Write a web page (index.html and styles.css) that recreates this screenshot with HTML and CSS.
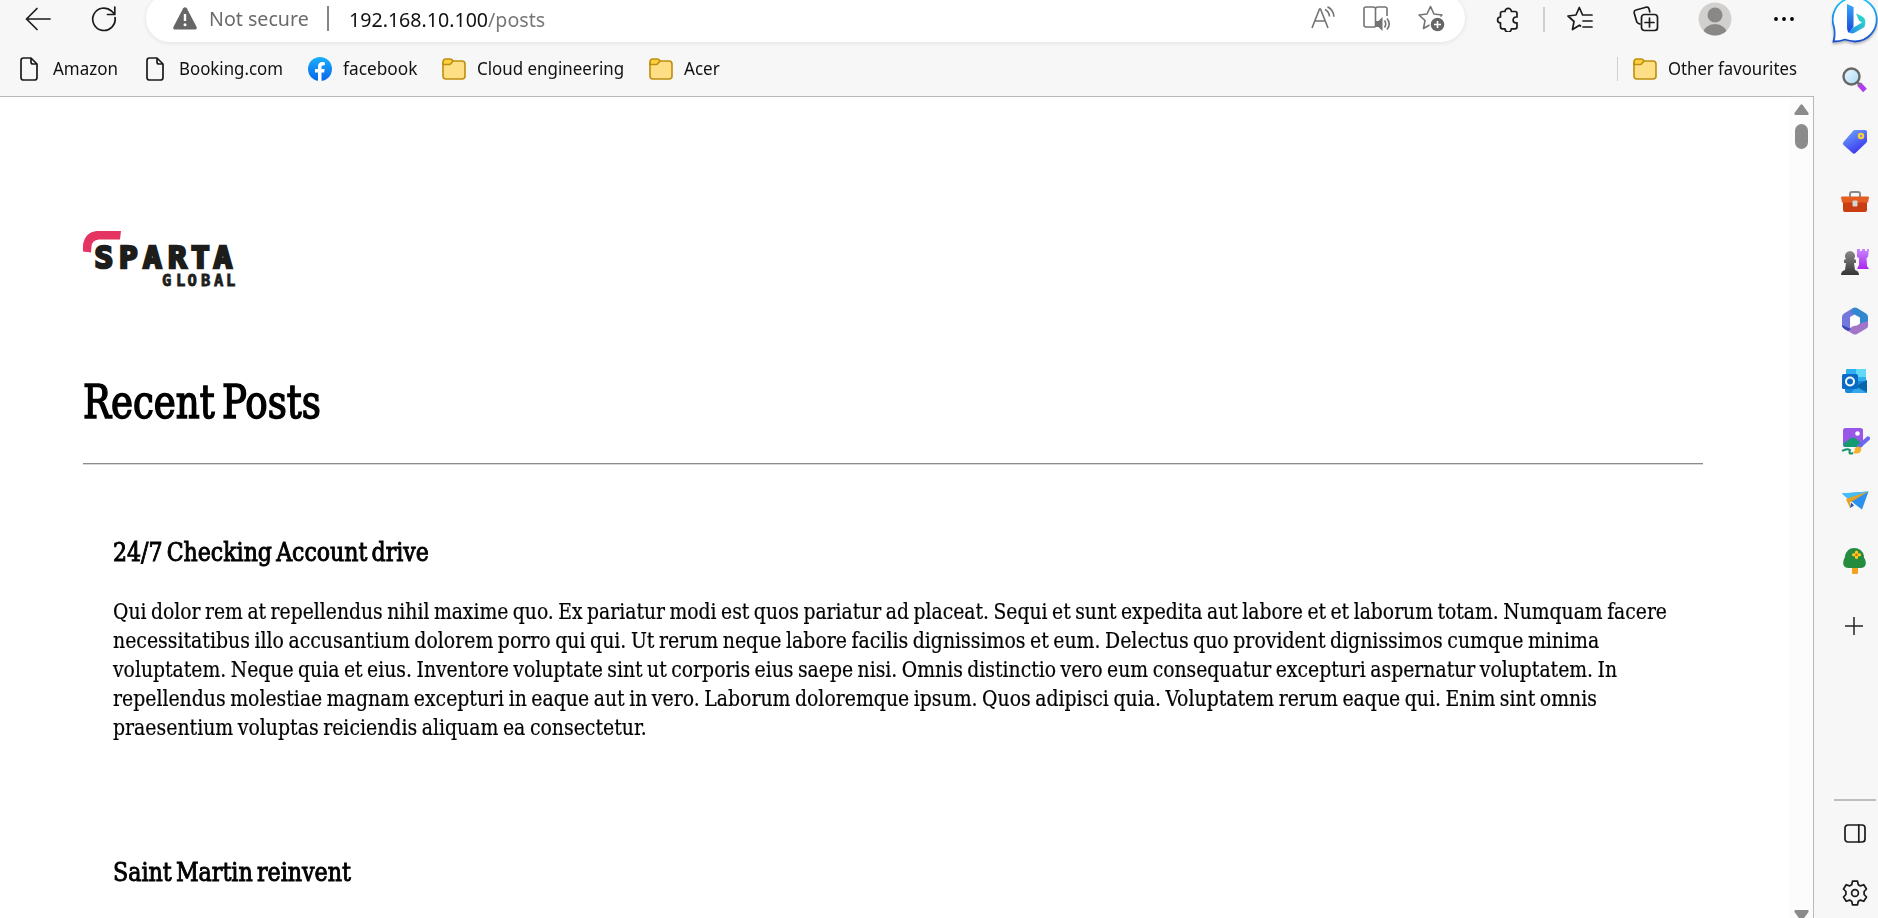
FILE: index.html
```html
<!DOCTYPE html>
<html lang="en">
<head>
<meta charset="utf-8">
<title>Recent Posts</title>
<link rel="stylesheet" href="styles.css">
</head>
<body>
<div class="browser">
  <main class="window">
    <header class="toolbar">
      <svg class="ico back" width="26" height="24" viewBox="0 0 26 24"><path d="M12 1.500 1.500 12 12 22.500M1.500 12H25"/></svg>
      <svg class="ico reload" width="26" height="26" viewBox="0 0 26 26"><path d="M24 11.500A11.200 11.200 0 1 1 20.500 5L23.500 8M23.800 1v7.500H16.500"/></svg>
      <div class="address">
        <svg class="warn" width="24" height="23" viewBox="0 0 24 23"><path d="M10.200 1.200Q12-.8 13.800 1.200L23.600 20Q24.300 22.500 22 22.600H2Q-.3 22.500.4 20Z" fill="#666"/><path d="M12 7v7" stroke="#fff" stroke-width="2.400"/><circle cx="12" cy="17.700" r="1.500" fill="#fff"/></svg>
        <span class="slot secure"><span class="fit" data-width="100">Not secure</span></span>
        <i class="bar"></i>
        <span class="slot url"><span class="fit" data-width="196">192.168.10.100<em>/posts</em></span></span>
        <div class="tools">
          <svg width="25" height="24" viewBox="0 0 25 24"><path d="M1 22 8.500 3h1L17 22M4 15h10M14 3.500q4 2 4.500 7M16.500 .8q6 3 6.500 10"/></svg>
          <svg width="28" height="26" viewBox="0 0 28 26"><path d="M12.500 22H3q-2 0-2-2V4q0-2 2-2h7q2.500 0 2.500 2v18M12.500 4q0-2 2.500-2h7q2 0 2 2v7"/><path d="M13 16v6h2.500l4 4V12l-4 4z" fill="#737373" stroke="none"/><path d="M21.500 15.500q2.500 3.500 0 7M24 13.500q4.500 5.500 0 11"/></svg>
          <svg width="27" height="27" viewBox="0 0 27 27"><path d="M11.500 20 5.500 23.500 7 15.500 1 10l8-1 3.500-7.500L16 9l8 1-1.500 1.500" stroke-linejoin="round"/><circle cx="19.500" cy="19.500" r="6.800" fill="#666" stroke="none"/><path d="M19.500 16v7M16 19.500h7" stroke="#fff" stroke-width="1.600"/></svg>
        </div>
      </div>
      <svg class="ico puzzle" width="23" height="25" viewBox="0 0 23 25"><path d="M9 4.500a3.200 3.200 0 0 1 6.400 0H19q2 0 2 2V10h-1a2.900 2.900 0 0 0 0 5.800h1v4q0 2-2 2h-3.600a3.200 3.200 0 0 1-6.400 0H6.500q-2 0-2-2v-4a2.900 2.900 0 0 1 0-5.800V6.500q0-2 2-2z"/></svg>
      <i class="bar light"></i>
      <svg class="ico favs" width="26" height="26" viewBox="0 0 26 26"><path d="M13.500 20 12.500 19.200 5.500 23.500 7 15.500 1 10l8-1 3.300-7.500L15.600 9H25M16 15h9M16 21h9"/></svg>
      <svg class="ico coll" width="26" height="26" viewBox="0 0 26 26"><rect x="8.500" y="8.500" width="16" height="16" rx="3"/><path d="M16.500 12v9M12 16.500h9M7 18 5.500 17.500Q4 17 3.500 15L1.200 7Q.8 4.500 3 4L13 1.200q2.500-.5 3 1.500l.8 3.300"/></svg>
      <svg class="avatar" width="34" height="34" viewBox="0 0 34 34"><defs><clipPath id="av"><circle cx="17" cy="17" r="16.500"/></clipPath></defs><g clip-path="url(#av)"><circle cx="17" cy="17" r="17" fill="#d2d0ce"/><circle cx="17" cy="13" r="7.500" fill="#8a8886"/><ellipse cx="17" cy="32" rx="12" ry="10" fill="#8a8886"/></g></svg>
      <svg class="dots" width="20" height="6" viewBox="0 0 20 6"><circle cx="2" cy="3" r="1.900"/><circle cx="10" cy="3" r="1.900"/><circle cx="18" cy="3" r="1.900"/></svg>
    </header>

    <nav class="bookmarks">
      <svg class="doc" width="18" height="24" viewBox="0 0 18 24"><path d="M3.500 1H11l6 6v13.500q0 2.500-2.500 2.500h-11Q1 23 1 20.500v-17Q1 1 3.500 1zM11 1v4q0 2 2 2h4"/></svg>
      <span class="slot first"><span class="fit" data-width="65">Amazon</span></span>
      <svg class="doc" width="18" height="24" viewBox="0 0 18 24"><path d="M3.500 1H11l6 6v13.500q0 2.500-2.500 2.500h-11Q1 23 1 20.500v-17Q1 1 3.500 1zM11 1v4q0 2 2 2h4"/></svg>
      <span class="slot"><span class="fit" data-width="104">Booking.com</span></span>
      <svg width="24" height="24" viewBox="0 0 24 24"><defs><linearGradient id="fb" x2="0" y2="1"><stop stop-color="#1aafff"/><stop offset="1" stop-color="#0866e8"/></linearGradient></defs><circle cx="12" cy="12" r="12" fill="url(#fb)"/><path d="M10 24v-8.500H7V12h3V9.500Q10 5 14.500 5q1.300 0 2.300.3v3h-1.600q-1.700 0-1.700 1.600V12h3.200l-.6 3.500h-2.600V24z" fill="#fff"/></svg>
      <span class="slot"><span class="fit" data-width="74">facebook</span></span>
      <svg class="folder" width="24" height="22" viewBox="0 0 24 22"><rect x="1" y="3" width="22" height="18" rx="3" fill="#ffdf86"/><path d="M1 6.500V4q0-3 3-3h4q2 0 3 2L9 5.500q-1 1-2 1z" fill="#ffd140"/></svg>
      <span class="slot"><span class="fit" data-width="147">Cloud engineering</span></span>
      <svg class="folder" width="24" height="22" viewBox="0 0 24 22"><rect x="1" y="3" width="22" height="18" rx="3" fill="#ffdf86"/><path d="M1 6.500V4q0-3 3-3h4q2 0 3 2L9 5.500q-1 1-2 1z" fill="#ffd140"/></svg>
      <span class="slot"><span class="fit" data-width="36">Acer</span></span>
      <div class="others">
        <svg class="folder" width="24" height="22" viewBox="0 0 24 22"><rect x="1" y="3" width="22" height="18" rx="3" fill="#ffdf86"/><path d="M1 6.500V4q0-3 3-3h4q2 0 3 2L9 5.500q-1 1-2 1z" fill="#ffd140"/></svg>
        <span class="slot"><span class="fit" data-width="129">Other favourites</span></span>
      </div>
    </nav>

    <div class="viewport">
      <article class="page">
        <svg class="logo" width="151" height="57" viewBox="0 0 151 57">
          <path d="M0 20.500V14Q2 1 14 0H38l-1 8.500H16q-7 .5-7.500 7L8 21.500z" fill="#e63462"/>
          <g class="brand"><text x="11.500 36 60 85 108 130.500" y="37" font-size="31">SPARTA</text></g>
          <g class="brand small"><text x="79 93 104.500 118 131 143" y="54.500" font-size="15.500" textLength="72" lengthAdjust="spacing">GLOBAL</text></g>
        </svg>
        <h1><span class="fit" data-width="238">Recent Posts</span></h1>
        <hr>
        <section class="post">
          <h3><span class="fit" data-width="316">24/7 Checking Account drive</span></h3>
          <p>
            <span class="fit" data-width="1554">Qui dolor rem at repellendus nihil maxime quo. Ex pariatur modi est quos pariatur ad placeat. Sequi et sunt expedita aut labore et et laborum totam. Numquam facere</span>
            <span class="fit" data-width="1486">necessitatibus illo accusantium dolorem porro qui qui. Ut rerum neque labore facilis dignissimos et eum. Delectus quo provident dignissimos cumque minima</span>
            <span class="fit" data-width="1504">voluptatem. Neque quia et eius. Inventore voluptate sint ut corporis eius saepe nisi. Omnis distinctio vero eum consequatur excepturi aspernatur voluptatem. In</span>
            <span class="fit" data-width="1484">repellendus molestiae magnam excepturi in eaque aut in vero. Laborum doloremque ipsum. Quos adipisci quia. Voluptatem rerum eaque qui. Enim sint omnis</span>
            <span class="fit" data-width="534">praesentium voluptas reiciendis aliquam ea consectetur.</span>
          </p>
        </section>
        <section class="post">
          <h3><span class="fit" data-width="238">Saint Martin reinvent</span></h3>
        </section>
      </article>
      <div class="scroll">
        <svg width="15" height="11" viewBox="0 0 15 11"><path d="M6.500.8q1-1 2 0l6 8.200q.5 2-1 2h-12q-1.500 0-1-2z"/></svg>
        <i class="thumb"></i>
        <svg class="down" width="15" height="11" viewBox="0 0 15 11"><path d="M6.500 10.200q1 1 2 0l6-8.200q.5-2-1-2h-12q-1.500 0-1 2z"/></svg>
      </div>
    </div>
  </main>

  <aside class="side">
    <svg class="bing" width="46" height="48" viewBox="0 -1 46 48"><defs><linearGradient id="b1" x2="0" y2="1"><stop stop-color="#20c8f8"/><stop offset="1" stop-color="#1b50d0"/></linearGradient><linearGradient id="b2" x2="0" y2="1"><stop stop-color="#38a8fa"/><stop offset="1" stop-color="#1746d8"/></linearGradient><linearGradient id="b3" x1="1" x2="0" y2="1"><stop stop-color="#30e8c0"/><stop offset="1" stop-color="#2388f0"/></linearGradient></defs><path d="M1.500 44.500Q3.500 38 2 30A22 22 0 1 1 23 44.500Q16 43.500 13 42.500 8 44.500 1.500 44.500z" fill="#fff" stroke="url(#b1)" stroke-width="1.800"/><path d="M15 7l6.500 3v20l-4.500 6q-2-2-2-5z" fill="url(#b2)"/><path d="M17 35q2 2.500 6 .5l9.500-5.500q3-8-3-11l-5.500-2.500 3 7 3 2-8.500 5z" fill="url(#b3)"/></svg>
    <svg width="26" height="26" viewBox="0 0 26 26"><defs><linearGradient id="m" x2="1" y2="1"><stop stop-color="#eef8ff"/><stop offset="1" stop-color="#a9d9f7"/></linearGradient></defs><path d="m17 17 6 6.500" stroke="#b23df0" stroke-width="5"/><path d="m14 14 4 4" stroke="#777" stroke-width="3"/><circle cx="9.500" cy="9.500" r="8" fill="url(#m)" stroke="#686868" stroke-width="2.400"/></svg>
    <svg width="26" height="26" viewBox="0 0 26 26"><defs><linearGradient id="t" x2=".6" y2="1"><stop stop-color="#71aefc"/><stop offset="1" stop-color="#3a35ee"/></linearGradient></defs><path d="M13 1h10q2 0 2 2v9q0 1-1 2L13.500 24q-1.500 1.500-3 0L1.500 16q-1.500-1.500 0-3L11 2q1-1 2-1z" fill="url(#t)"/><circle cx="19" cy="7" r="2.300" fill="#8598e8" stroke="#ffd02c" stroke-width="2"/></svg>
    <svg width="28" height="22" viewBox="0 0 28 22"><path d="M9 6V3q0-2 2-2h6q2 0 2 2v3" fill="none" stroke="#898989" stroke-width="2"/><path d="M2 9h24v10q0 2-2 2H4q-2 0-2-2z" fill="#c93d12"/><path d="M1 5.500h26q1 0 1 1l-1 5H1l-1-5q0-1 1-1z" fill="#e45d22"/><rect x="11.500" y="9.500" width="5" height="6" rx="1" fill="#d2d4d5"/></svg>
    <svg width="28" height="28" viewBox="0 0 28 28"><defs><linearGradient id="p" x2="0" y2="1"><stop stop-color="#8a8a8a"/><stop offset="1" stop-color="#353535"/></linearGradient><linearGradient id="r" x2="0" y2="1"><stop stop-color="#c987ff"/><stop offset="1" stop-color="#a928ed"/></linearGradient></defs><path d="M16 1h3v2h2V1h3v2h2V1h2l-1 8-1.500 1 .5 8 2 3H16l2-4V10l-2-1z" fill="url(#r)"/><path d="M9 3a5 5 0 0 1 4 8l2 1v3h-2l1 7q4 1 4 5H0q0-4 4-5l1-7H3v-3l2-1A5 5 0 0 1 9 3z" fill="url(#p)"/></svg>
    <svg width="26" height="28" viewBox="0 0 26 28"><path d="M11 1 2 6.500Q0 7.500 0 10v10l8 2.500V10l8-4.500z" fill="#7478dd"/><path d="M11 1q2-1 4 0l9 5.500q2 1 2 3.500v7q0 3-2 4l-6-2.500v-8L9 5.500z" fill="#3188ce"/><path d="m8 21 4.500-2.500L26 14v5q0 1.500-2 2.800L15 27q-2 1-4 0l-9-5.200z" fill="#a175c7"/><path d="m0 18 9 4-3 2-4-2.200Q0 20.500 0 18z" fill="#344ab3"/><circle cx="13" cy="14" r="4.800" fill="#fff"/></svg>
    <svg width="26" height="24" viewBox="0 0 26 24"><path d="M5 0h18q1 0 1 1v15H4V1q0-1 1-1z" fill="#2eb0ef"/><path d="M14 0h10v8H14z" fill="#60daf6"/><path d="M3 12h22v12H5q-2 0-2-2z" fill="#1787d7"/><path d="m14 17 11-6v12z" fill="#0866a9"/><path d="m14 18 11 6H9z" fill="#35a7e8"/><rect y="5" width="16" height="15" rx="1.500" fill="#096cc4"/><circle cx="8" cy="12.500" r="4" fill="none" stroke="#fff" stroke-width="2"/></svg>
    <svg width="29" height="28" viewBox="0 0 29 28"><rect x="2" y="1" width="20" height="19" rx="2.500" fill="#9857e8"/><path d="m2 17 8-6q2-1 4 0l8 6q0 3-2 3H5q-3 0-3-3z" fill="#169a72"/><circle cx="16.500" cy="6.500" r="2.300" fill="#fff"/><path d="m18 19.500 9-8" stroke="#6b67ef" stroke-width="4.200" stroke-linecap="round"/><path d="M12 26q2-2 2-5 3-3 6 0 1 3-2 5-3 1-6 0z" fill="#f6b12c"/><path d="M1 24q5-3 8-1-2 5 3 3" fill="none" stroke="#14906c" stroke-width="2"/></svg>
    <svg width="27" height="20" viewBox="0 0 27 20"><path d="M0 2.500 26.500.5 20 18.500 14 14z" fill="#2b91ed"/><path d="M0 2.500 26.500.5 7 9z" fill="#47bdf5"/><path d="M26.500.5 8 11.500V17L4 8z" fill="#eaa11d"/><path d="m8 17 1-5.500 3 3z" fill="#204fa5"/></svg>
    <svg width="24" height="27" viewBox="0 0 24 27"><path d="M9 18h6v7q0 1-1 1h-4q-1 0-1-1z" fill="#f1a41b"/><path d="M11 0q8 0 10 8-.5 2 1 3 3 9-5 9H6q-8 0-5-9 1-1 1-3Q4 0 11 0z" fill="#258b3e"/><path d="M13.500 4v5.500M10.500 6.800h6" stroke="#ffca20" stroke-width="3" stroke-linecap="round"/><circle cx="13.500" cy="6.800" r="1.300" fill="#d06a14"/></svg>
    <svg class="plus" width="18" height="18" viewBox="0 0 18 18"><path d="M9 0v18M0 9h18" stroke="#242424" stroke-width="1.500"/></svg>
    <i class="rule"></i>
    <svg width="22" height="19" viewBox="0 0 22 19"><g class="line"><rect x="1" y="1" width="20" height="17" rx="3"/><path d="M14.800 1v17"/></g></svg>
    <svg class="gear" width="26" height="26" viewBox="0 0 26 26"><g class="line"><path d="M10.500 1.200h5l.8 3.500 2.100 1.200 3.400-1.200 2.700 4.300-2.400 2.500v3l2.400 2.500-2.700 4.300-3.400-1.200-2.100 1.200-.8 3.500h-5l-.8-3.500-2.100-1.200-3.400 1.200L1.500 17l2.400-2.500v-3L1.500 9l2.700-4.300 3.400 1.200 2.100-1.200z"/><circle cx="13" cy="13" r="3.400"/></g></svg>
  </aside>
</div>
<script src="fit.js"></script>
</body>
</html>
```
FILE: styles.css
```css
* { box-sizing: border-box; }
body { margin: 0; overflow: hidden; background: #f7f7f7; font-family: "Noto Sans", "Open Sans", sans-serif; color: #111; }
svg { flex: none; display: block; }
.browser { display: grid; grid-template-columns: 1814px 64px; width: 1878px; height: 918px; overflow: hidden; }
.window { display: grid; grid-template-rows: 42px 54px 1fr; min-width: 0; height: 918px; background: #f7f7f7; }

.fit { display: block; width: max-content; white-space: nowrap; transform-origin: 0 50%; }
.slot { display: block; flex: none; overflow: visible; }

.toolbar { display: flex; align-items: center; height: 38px; padding-left: 25px; }
.ico, .line { fill: none; stroke: #1b1b1b; stroke-width: 1.7; stroke-linejoin: round; stroke-linecap: round; }
.reload { margin-left: 40px; }
.address { display: flex; flex: none; align-items: center; width: 1319px; height: 48px; margin: -2px 0 0 29px; padding-left: 27px; border-radius: 24px; background: #fff; box-shadow: 0 1px 5px rgba(0, 0, 0, .09); }
.secure { margin-left: 12px; padding-top: 1px; color: #6b6b6b; font-size: 20px; }
.bar { flex: none; width: 1.5px; height: 25px; margin-left: 18px; background: #858585; }
.url { margin-left: 20px; padding-top: 2px; font-size: 20px; color: #111; }
.url em { font-style: normal; color: #777; }
.tools { display: flex; align-items: center; gap: 27px; margin-left: auto; padding-right: 20px; fill: none; stroke: #737373; stroke-width: 1.6; }
.puzzle { margin-left: 31px; }
.light { width: 2px; margin-left: 24px; background: #cfcfcf; }
.favs { margin-left: 22px; }
.coll { margin-left: 40px; }
.avatar { margin-left: 39px; }
.dots { margin-left: 42px; }

.bookmarks { display: flex; align-items: center; padding: 0 17px 0 20px; margin-bottom: -1px; height: 55px; border-bottom: 1px solid #b9b9b9; font-size: 17.5px; }
.bookmarks .slot { padding-bottom: 2px; }
.bookmarks > .slot { margin: 0 25px 0 11px; }
.bookmarks > .doc + .slot { margin: 0 25px 0 15px; }
.bookmarks > .doc + .first { margin-right: 28px; }
.doc { fill: none; stroke: #1c1c1c; stroke-width: 1.7; stroke-linejoin: round; }
.folder { stroke: #be8e0c; stroke-width: 1.6; }
.others { display: flex; align-items: center; gap: 11px; height: 24px; margin-left: auto; padding-left: 15px; border-left: 1px solid #cfcfcf; }

.viewport { display: grid; grid-template-columns: 1790px 23px; margin-top: 1px; min-height: 0; overflow: hidden; border-right: 1px solid #b9b9b9; background: #fff; }
.page { min-width: 0; padding: 134px 87px 0 83px; overflow: hidden; color: #000; font-family: "DejaVu Serif Condensed", "DejaVu Serif", serif; }
.logo { overflow: visible; }
.brand { fill: #1d1d1b; stroke: #1d1d1b; stroke-width: 2.6; font-family: "DejaVu Sans Mono", monospace; font-weight: 700; }
.small { stroke-width: .8; }
.page h1 { height: 60px; margin: 84px 0 0; font-size: 46px; line-height: 60px; font-weight: 400; word-spacing: -5px; -webkit-text-stroke: 1.5px #000; }
.page hr { height: 2px; margin: 31px 0 0; border: 0; border-top: 1px solid #8c8c8c; border-bottom: 1px solid #d8d8d8; }
.post { height: 320px; padding: 69px 30px 0; }
.post h3 { height: 36px; margin: 0; font-size: 26px; line-height: 36px; font-weight: 400; word-spacing: -3px; -webkit-text-stroke: .9px #000; }
.post p { margin: 27px 0 0; font-size: 21.5px; line-height: 29px; word-spacing: -1.5px; -webkit-text-stroke: .2px #000; }

.scroll { display: flex; flex-direction: column; align-items: center; padding-top: 7px; background: #fcfcfc; fill: #8b8b8b; }
.thumb { width: 13px; height: 25px; margin-top: 9px; border-radius: 7px; background: #8b8b8b; }
.down { margin: auto 0 -3px; }

.side { display: grid; grid-template-rows: 48px 63px 61px 60px 59px 60px 60px 60px 59px 62px 67px 142px 65px 54px; justify-items: center; align-items: center; height: 918px; padding-left: 18px; overflow: hidden; background: #f7f7f7; }
.side > .bing { align-self: start; margin-top: -4px; filter: drop-shadow(0 2px 1px rgba(0, 0, 0, .25)); }
.plus { margin-right: 2px; }
.rule { align-self: end; width: 42px; height: 2px; background: #bdbdbd; }
```
FILE: fit.js
```js
document.querySelectorAll('.fit').forEach(function (el) {
  var target = Number(el.dataset.width);
  var scale = target / el.offsetWidth;
  el.style.transform = 'scaleX(' + scale + ')';
  if (el.parentElement.classList.contains('slot')) {
    el.parentElement.style.width = target + 'px';
  }
});
```
